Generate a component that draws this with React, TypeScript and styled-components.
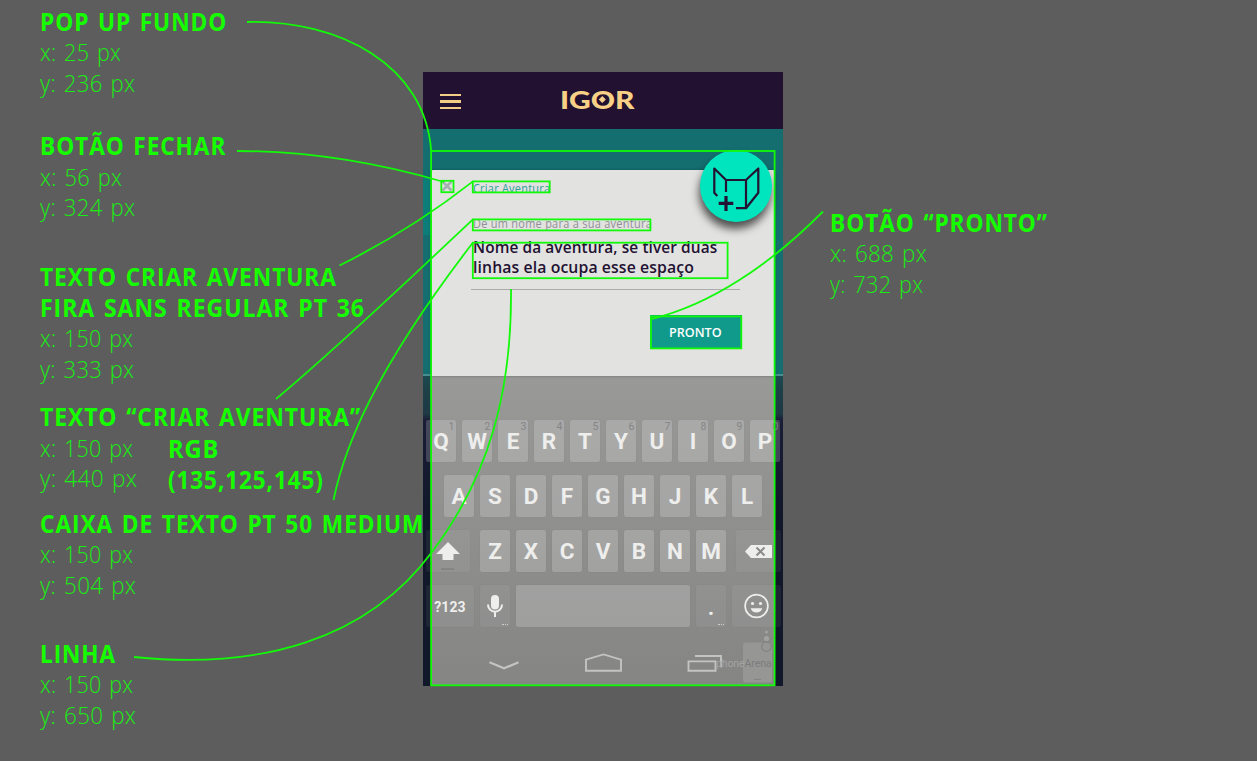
import React, { useLayoutEffect, useRef, useState } from "react";
import styled, { createGlobalStyle } from "styled-components";

const GlobalStyle = createGlobalStyle`
  body { margin: 0; background: #fff; font-family: "Open Sans", "Noto Sans", sans-serif; }
  * { box-sizing: border-box; }
`;

const Board = styled.main`
  position: relative;
  display: flex;
  width: 1257px;
  height: 761px;
  background: #5d5d5d;
  overflow: hidden;
`;

const NotesLeft = styled.section`
  width: 423px;
  padding: 6.2px 0 0 40px;
`;

const NotesRight = styled.section`
  flex: 1;
  padding: 206.8px 0 0 47px;
`;

const Note = styled.article<{ $h: number }>`
  height: ${(p) => p.$h}px;
  line-height: 30.6px;
  white-space: nowrap;
  color: #16ff00;
`;

const NoteTitle = styled.h2<{ $drop?: boolean }>`
  margin: 0;
  height: 30.6px;
  padding-top: ${(p) => (p.$drop ? 1 : 0)}px;
  font-size: 25px;
  font-weight: 700;
  line-height: 30.6px;
  letter-spacing: 1px;
  word-spacing: 2px;
`;

const NoteLine = styled.p`
  margin: 0;
  height: 30.6px;
  padding-top: 0.6px;
  font-size: 24px;
  font-weight: 300;
  letter-spacing: 0.3px;
  word-spacing: 2px;
  color: #18ee12;
`;

const NoteColumns = styled.div`
  display: grid;
  grid-template-columns: 128px auto;
`;

const Line = styled.span`
  display: inline-block;
  white-space: pre;
  transform-origin: 0 50%;
`;

/* Condenses or expands a line of text so that it fills a given measure. */
function Fit({ w, children }: { w: number; children: string }) {
  const ref = useRef<HTMLSpanElement>(null);
  const [scale, setScale] = useState(1);
  useLayoutEffect(() => {
    if (ref.current) setScale(w / ref.current.offsetWidth);
  }, [w, children]);
  return (
    <Line ref={ref} style={{ transform: `scaleX(${scale})` }}>
      {children}
    </Line>
  );
}

const Phone = styled.section`
  display: flex;
  flex-direction: column;
  width: 360px;
  height: 613.5px;
  margin-top: 72px;
  background: #111829;
`;

const Header = styled.header`
  display: grid;
  grid-template-columns: 136.5px 84px 1fr;
  align-items: center;
  height: 57px;
  background: #231132;
`;

const Burger = styled.div`
  display: flex;
  flex-direction: column;
  gap: 4px;
  margin: 2px 0 0 17px;
  i { width: 20.5px; height: 2.2px; background: #f2cd85; }
`;

const Logo = styled.div`
  position: relative;
  height: 30px;
  margin-bottom: 4px;
  font: 900 25.5px/30px Lato, sans-serif;
  color: #f8d187;
  &::after {
    content: "";
    position: absolute;
    left: 40px;
    top: 13.2px;
    width: 4.6px;
    height: 4.6px;
    background: #f8d187;
    transform: rotate(45deg);
  }
`;

const Content = styled.div`
  height: 247px;
  padding: 41px 8px 0;
  background:
    linear-gradient(#0d7d7a, #0d7d7a) 0 49px / 8px 57px no-repeat,
    linear-gradient(#4a8f90, #4a8f90) 0 245px / 100% 2px no-repeat,
    #146e6f;
`;

const Dialog = styled.div`
  position: relative;
  height: 206px;
  padding: 10px 35px 0 41px;
  border-radius: 2px 2px 0 0;
  background: #e2e2e1;
  box-shadow: 0 0 3px rgba(0, 0, 0, 0.3);
  white-space: nowrap;
`;

const DialogTitle = styled.h1`
  margin: 0 0 0 1px;
  height: 18px;
  font-size: 12px;
  font-weight: 400;
  line-height: 18px;
  letter-spacing: 0.3px;
  color: #2a9f98;
`;

const Label = styled.p`
  margin: 17px 0 0 1px;
  height: 18px;
  font-size: 12px;
  line-height: 18px;
  letter-spacing: 0.3px;
  color: #918f96;
`;

const NameField = styled.p`
  margin: 4px 0 0 -1px;
  padding-left: 2px;
  width: 269px;
  height: 53px;
  border-bottom: 1px solid #ababab;
  font-size: 16.2px;
  font-weight: 600;
  line-height: 20.2px;
  letter-spacing: 0.1px;
  color: #231232;
`;

const DoneButton = styled.button`
  display: block;
  width: 92px;
  height: 34px;
  margin: 25px 0 0 178px;
  padding: 0 0 0 18.5px;
  border: 0;
  background: #0f9a8c;
  color: #fff;
  text-align: left;
  font: 600 13.3px/34px "Open Sans", sans-serif;
`;

const CloseMark = styled.svg`
  position: absolute;
  left: 10px;
  top: 10px;
`;

const Fab = styled.div`
  position: absolute;
  left: 269px;
  top: -20px;
  width: 72px;
  height: 72px;
  border-radius: 50%;
  background: #00e5bd;
  box-shadow: -1px 7px 9px rgba(0, 0, 0, 0.65);
`;

const Keyboard = styled.div`
  display: flex;
  flex-direction: column;
  height: 309.5px;
  padding: 44px 2px 0 3px;
  background:
    linear-gradient(#999998, #858584) 8px 0 / 344px 100% no-repeat,
    linear-gradient(#1c4a50 0, #1d4047 14px, #1e3944 38px, #1a1e36 44px, #161a31 90px, #111829 140px);
`;

const KeyRow = styled.div<{ $indent?: number }>`
  display: flex;
  height: 42px;
  margin: 0 0 13px ${(p) => p.$indent ?? 0}px;
`;

const Key = styled.div<{ $w?: number; $gap?: number; $dim?: boolean }>`
  position: relative;
  display: flex;
  flex: none;
  align-items: center;
  justify-content: center;
  width: ${(p) => p.$w ?? 30}px;
  margin-right: ${(p) => p.$gap ?? 6}px;
  border-radius: 2px;
  background: rgba(255, 255, 255, ${(p) => (p.$dim ? 0.06 : 0.19)});
  box-shadow: 0 0 1px rgba(0, 0, 0, 0.08);
  color: #eeeeed;
  font: 700 22.5px/1 Roboto, sans-serif;
`;

const Hint = styled.span`
  position: absolute;
  right: 1.5px;
  top: 2px;
  font: 400 10.5px/10px Roboto, sans-serif;
  color: #858585;
`;

const Dots = styled.span`
  position: absolute;
  right: 2px;
  bottom: 2px;
  width: 6px;
  border-bottom: 1px dotted #ccc;
`;

const SmallCaption = styled.span`
  padding-top: 1px;
  font-size: 14px;
  letter-spacing: 0.1px;
`;

const Period = styled.span`
  padding-top: 2px;
`;

const NavBar = styled.div`
  position: relative;
  height: 44px;
  margin: 0 -2px 0 -3px;
  svg { overflow: visible; }
`;

const Watermark = styled.span`
  position: absolute;
  left: 293px;
  top: 18px;
  font: 400 10.5px/12px Roboto, sans-serif;
  color: #a3a3a2;
  letter-spacing: -0.1px;
  b { font-weight: 400; color: #7c7c7c; }
`;

const Overlay = styled.svg`
  position: absolute;
  inset: 0;
  pointer-events: none;
`;

const Callouts = () => (
  <Overlay width="1257" height="761" fill="none" stroke="#12fa08" strokeWidth="1.8">
    <rect x="431.1" y="151" width="343.5" height="534.3" />
    <rect x="441.3" y="180.8" width="12.2" height="11.4" />
    <rect x="472.8" y="181.4" width="76.9" height="11" />
    <rect x="472.8" y="219.4" width="177.6" height="11" />
    <rect x="472.8" y="242.7" width="254.8" height="35.5" />
    <rect x="651" y="316.4" width="90.3" height="32" />
    <path d="M247 22 C340 20 425 65 431.2 151" />
    <path d="M237 151 C305 151 375 162 444 182" />
    <path d="M339.5 265.5 C385 243 430 215 473 181.4" />
    <path d="M276 399 C345 341 407 281 473 219.4" />
    <path d="M333.5 500 C345 445 375 370 473 242.5" />
    <path d="M823 211.5 C770 265 710 305 652 318.8" />
    <path d="M134 657 C260 670 367 640 432 552 C490 475 512 390 511 289" />
  </Overlay>
);

const topRow = "QWERTYUIOP".split("");

export default function App() {
  return (
    <>
      <GlobalStyle />
      <Board>
        <NotesLeft>
          <Note $h={124.3}>
            <NoteTitle><Fit w={187}>POP UP FUNDO</Fit></NoteTitle>
            <NoteLine><Fit w={81}>x: 25 px</Fit></NoteLine>
            <NoteLine><Fit w={95}>y: 236 px</Fit></NoteLine>
          </Note>
          <Note $h={130.7}>
            <NoteTitle><Fit w={186}>BOTÃO FECHAR</Fit></NoteTitle>
            <NoteLine><Fit w={82}>x: 56 px</Fit></NoteLine>
            <NoteLine><Fit w={95}>y: 324 px</Fit></NoteLine>
          </Note>
          <Note $h={140.2}>
            <NoteTitle><Fit w={297}>TEXTO CRIAR AVENTURA</Fit></NoteTitle>
            <NoteTitle><Fit w={325}>FIRA SANS REGULAR PT 36</Fit></NoteTitle>
            <NoteLine><Fit w={93}>x: 150 px</Fit></NoteLine>
            <NoteLine><Fit w={94}>y: 333 px</Fit></NoteLine>
          </Note>
          <Note $h={106.4}>
            <NoteTitle><Fit w={321}>TEXTO “CRIAR AVENTURA”</Fit></NoteTitle>
            <NoteColumns>
              <NoteLine><Fit w={93}>x: 150 px</Fit></NoteLine>
              <NoteTitle $drop><Fit w={51}>RGB</Fit></NoteTitle>
              <NoteLine><Fit w={97}>y: 440 px</Fit></NoteLine>
              <NoteTitle $drop><Fit w={156}>(135,125,145)</Fit></NoteTitle>
            </NoteColumns>
          </Note>
          <Note $h={130}>
            <NoteTitle><Fit w={384}>CAIXA DE TEXTO PT 50 MEDIUM</Fit></NoteTitle>
            <NoteLine><Fit w={93}>x: 150 px</Fit></NoteLine>
            <NoteLine><Fit w={96}>y: 504 px</Fit></NoteLine>
          </Note>
          <Note $h={92}>
            <NoteTitle><Fit w={76}>LINHA</Fit></NoteTitle>
            <NoteLine><Fit w={93}>x: 150 px</Fit></NoteLine>
            <NoteLine><Fit w={96}>y: 650 px</Fit></NoteLine>
          </Note>
        </NotesLeft>

        <Phone>
          <Header>
            <Burger><i /><i /><i /></Burger>
            <Logo><Fit w={74}>IGOR</Fit></Logo>
          </Header>
          <Content>
            <Dialog>
              <CloseMark width="12" height="12" viewBox="0 0 12 12" stroke="#a3b1b1" strokeWidth="2.6">
                <path d="M1.5 1.5l9 9M10.5 1.5l-9 9" />
              </CloseMark>
              <DialogTitle><Fit w={77}>Criar Aventura</Fit></DialogTitle>
              <Label><Fit w={179}>De um nome para a sua aventura</Fit></Label>
              <NameField>
                <Fit w={244.5}>Nome da aventura, se tiver duas</Fit>
                <br />
                <Fit w={220.5}>linhas ela ocupa esse espaço</Fit>
              </NameField>
              <DoneButton><Fit w={53}>PRONTO</Fit></DoneButton>
              <Fab>
                <svg width="72" height="72" fill="none" stroke="#231232" strokeWidth="2.2" strokeLinejoin="round">
                  <path d="M17.3 46L14.3 42.7V18.5L26 30V42M26 30H46L58.3 18.5V42.7L46 58.2V30M46 58.2H36" />
                  <path d="M26 46v15M18.7 53.4h14.6" strokeWidth="3.2" />
                </svg>
              </Fab>
            </Dialog>
          </Content>
          <Keyboard>
            <KeyRow>
              {topRow.map((k, i) => (
                <Key key={k}>{k}<Hint>{(i + 1) % 10}</Hint></Key>
              ))}
            </KeyRow>
            <KeyRow $indent={18}>
              {"ASDFGHJKL".split("").map((k) => <Key key={k}>{k}</Key>)}
            </KeyRow>
            <KeyRow>
              <Key $w={44} $gap={10} $dim>
                <svg width="44" height="42">
                  <path d="M22 12L34 24H27.5V30H16.5V24H10z" fill="#eeeeed" />
                  <path d="M15 39h13" stroke="#777" />
                </svg>
              </Key>
              {"ZXCVBNM".split("").map((k, i) => <Key key={k} $gap={i === 6 ? 10 : 6}>{k}</Key>)}
              <Key $w={45} $gap={0} $dim>
                <svg width="45" height="42">
                  <path d="M9 21.5L15 15H36V28H15z" fill="#eeeeed" />
                  <path d="M20.5 17.5l8 8M28.5 17.5l-8 8" stroke="#8b8b8b" strokeWidth="2" />
                </svg>
              </Key>
            </KeyRow>
            <KeyRow>
              <Key $w={48} $dim><SmallCaption>?123</SmallCaption></Key>
              <Key $dim>
                <svg width="30" height="42" fill="none" stroke="#eeeeed" strokeWidth="2">
                  <rect x="12" y="11" width="6" height="12.5" rx="3" fill="#eeeeed" />
                  <path d="M8 19.5c0 9.5 14 9.5 14 0M15 27v5" />
                </svg>
                <Dots />
              </Key>
              <Key $w={174} />
              <Key $dim><Period>.</Period><Dots /></Key>
              <Key $w={49} $gap={0} $dim>
                <svg width="49" height="42" fill="none" stroke="#eeeeed" strokeWidth="1.7">
                  <circle cx="24.5" cy="21" r="11.4" />
                  <circle cx="20.5" cy="18.5" r="1.6" fill="#eeeeed" stroke="none" />
                  <circle cx="28.5" cy="18.5" r="1.6" fill="#eeeeed" stroke="none" />
                  <path d="M18.7 23.3h11.6c-1 5.6-10.6 5.6-11.6 0z" fill="#eeeeed" stroke="none" />
                </svg>
              </Key>
            </KeyRow>
            <NavBar>
              <svg width="360" height="44" fill="none" stroke="#c3c3c2" strokeWidth="1.9">
                <rect x="320" y="2.5" width="29" height="40" rx="3" fill="#969695" stroke="none" />
                <circle cx="343.5" cy="-8" r="1.5" fill="#a2a2a1" stroke="none" />
                <circle cx="343.5" cy="-1.5" r="2.6" fill="#a2a2a1" stroke="none" />
                <circle cx="343.5" cy="6.5" r="4.8" stroke="#828282" strokeWidth="1.2" />
                <path d="M331 39.5h7" stroke="#838383" strokeWidth="1" />
                <path d="M66.5 22.3L81 28.3L95.5 22.3" strokeWidth="2.3" />
                <path d="M163 30.8V19.6L180.5 14.4L198 19.6V30.8z" />
                <path d="M265.5 21.4h27v9.4h-27zM272 16h26v11.2" />
              </svg>
              <Watermark>phone<b>Arena</b></Watermark>
            </NavBar>
          </Keyboard>
        </Phone>

        <NotesRight>
          <Note $h={92}>
            <NoteTitle><Fit w={218}>BOTÃO “PRONTO”</Fit></NoteTitle>
            <NoteLine><Fit w={97}>x: 688 px</Fit></NoteLine>
            <NoteLine><Fit w={93}>y: 732 px</Fit></NoteLine>
          </Note>
        </NotesRight>
        <Callouts />
      </Board>
    </>
  );
}
